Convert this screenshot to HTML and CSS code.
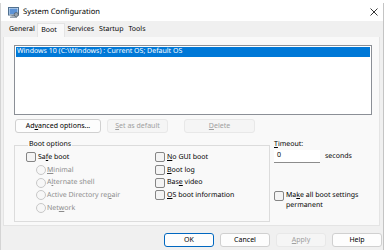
FILE: index.html
```html
<!DOCTYPE html>
<html lang="en">
<head>
    <meta charset="UTF-8">
    <title>System Configuration</title>
    <link rel="stylesheet" href="styles.css">
</head>
<body>
    <!-- Page behind the dialog, only its bottom edge shows -->
    <div class="behind"><div class="behind-text">windows 10/11 and windows server 2016/2019/2022</div></div>

    <div class="window">
        <!-- Title bar -->
        <div class="titlebar">
            <svg class="app-icon" width="11" height="11" viewBox="0 0 11 11">
                <rect x="0.5" y="0.5" width="10" height="7.5" fill="#e4ecf4" stroke="#50708f"/>
                <rect x="1.5" y="1.5" width="8" height="5.5" fill="#5d93d6"/>
                <rect x="3.5" y="8" width="4" height="1.5" fill="#7d8a97"/>
                <rect x="2" y="9.5" width="7" height="1.5" fill="#9aa5b0"/>
                <circle cx="8.3" cy="7.6" r="2.1" fill="#98a3ae" stroke="#4e5a66" stroke-width="0.7"/>
            </svg>
            <span class="title">System Configuration</span>
            <svg class="close" width="8" height="8" viewBox="0 0 8 8">
                <path d="M0.5 0.5 L7.5 7.5 M7.5 0.5 L0.5 7.5" stroke="#1f1f1f" stroke-width="0.9"/>
            </svg>
        </div>

        <!-- Tabs -->
        <div class="tabs">
            <span class="tab">General</span>
            <span class="tab active">Boot</span>
            <span class="tab">Services</span>
            <span class="tab">Startup</span>
            <span class="tab">Tools</span>
        </div>

        <div class="panel">
            <div class="listbox">
                <div class="list-item selected">Windows 10 (C:\Windows) : Current OS; Default OS</div>
            </div>

            <div class="list-buttons">
                <button class="btn btn-advanced">Ad<u>v</u>anced options...</button>
                <button class="btn btn-default" disabled><u>S</u>et as default</button>
                <button class="btn btn-delete" disabled><u>D</u>elete</button>
            </div>

            <div class="options-row">
                <fieldset class="boot-options">
                    <legend>Boot options</legend>
                    <div class="opt-col left">
                        <div class="opt"><span class="check"></span><span>Sa<u>f</u>e boot</span></div>
                        <div class="opt sub disabled"><span class="radio"></span><span><u>M</u>inimal</span></div>
                        <div class="opt sub disabled"><span class="radio"></span><span>A<u>l</u>ternate shell</span></div>
                        <div class="opt sub disabled"><span class="radio"></span><span>Active Directory re<u>p</u>air</span></div>
                        <div class="opt sub disabled"><span class="radio"></span><span>Net<u>w</u>ork</span></div>
                    </div>
                    <div class="opt-col">
                        <div class="opt"><span class="check"></span><span><u>N</u>o GUI boot</span></div>
                        <div class="opt"><span class="check"></span><span><u>B</u>oot log</span></div>
                        <div class="opt"><span class="check"></span><span>Bas<u>e</u> video</span></div>
                        <div class="opt"><span class="check"></span><span><u>O</u>S boot information</span></div>
                    </div>
                </fieldset>

                <div class="side">
                    <div class="timeout-label"><u>T</u>imeout:</div>
                    <div class="timeout-row">
                        <div class="textbox">0</div>
                        <span>seconds</span>
                    </div>
                    <div class="opt permanent"><span class="check"></span><span>Ma<u>k</u>e all boot settings<br>permanent</span></div>
                </div>
            </div>
        </div>

        <div class="footer">
            <button class="btn btn-ok">OK</button>
            <button class="btn">Cancel</button>
            <button class="btn" disabled><u>A</u>pply</button>
            <button class="btn">Help</button>
        </div>
    </div>
</body>
</html>
```

FILE: styles.css
```css
/* Global */
body {
    margin: 0;
    background: #ffffff;
    font-family: 'Noto Sans', 'Liberation Sans', sans-serif;
    font-size: 7px;
    color: #000;
    text-rendering: geometricPrecision;
    overflow: hidden;
}

u {
    text-decoration: underline;
    text-underline-offset: 1px;
    text-decoration-thickness: 1px;
}

.behind {
    height: 3px;
    overflow: hidden;
}

.behind-text {
    margin: -7px 0 0 262px;
    font-size: 7.5px;
    white-space: nowrap;
    color: #3a3a3a;
}

.window {
    width: 384px;
    height: 247px;
    background: #f0f0f0;
    border-left: 1px solid #d4d4d4;
    border-right: 1px solid #c4c4c4;
    box-sizing: border-box;
}

/* Title bar */
.titlebar {
    height: 18px;
    background: #fff;
    display: flex;
    align-items: center;
    padding-left: 7px;
    box-sizing: border-box;
}

.app-icon {
    margin-right: 4px;
}

.title {
    font-size: 7.6px;
    flex: 1;
}

.close {
    margin-right: 5px;
}

/* Tabs */
.tabs {
    height: 16px;
    display: flex;
    align-items: flex-end;
    padding-left: 5.5px;
}

.tab {
    height: 13px;
    line-height: 12px;
    padding: 0 2.5px;
}

.tab.active {
    background: #f9f9f9;
    height: 14px;
    line-height: 13px;
    padding: 0 7px 0 3px;
    border: 1px solid #e4e4e4;
    border-bottom: none;
    box-sizing: border-box;
}

/* Tab page */
.panel {
    margin: 0 3px 0 2px;
    height: 189px;
    background: #f9f9f9;
    border: 1px solid #e4e4e4;
    border-top: none;
    box-sizing: border-box;
    padding: 8px 6px 0 10px;
}

.listbox {
    width: 358px;
    height: 70px;
    background: #fff;
    border: 1px solid #8b8f96;
    padding: 1px 1px 0 1px;
    box-sizing: border-box;
}

.list-item {
    height: 10px;
    line-height: 10px;
    padding-left: 1px;
    white-space: nowrap;
}

.list-item.selected {
    background: #0078d7;
    color: #fff;
}

.list-buttons {
    display: flex;
    margin-top: 4px;
}

.btn {
    font-family: inherit;
    font-size: 7px;
    height: 14px;
    padding: 0;
    background: #fdfdfd;
    border: 1px solid #d0d0d0;
    border-radius: 3px;
    color: #000;
    line-height: 12px;
    white-space: nowrap;
}

.btn:disabled {
    background: #f5f5f5;
    border-color: #e8e8e8;
    color: #a0a0a0;
}

.btn-advanced {
    width: 86px;
    margin-left: 1px;
}

.btn-default {
    width: 61px;
    margin-left: 6px;
}

.btn-delete {
    width: 71px;
    margin-left: 16px;
}

/* Boot options */
.options-row {
    display: flex;
    margin-top: 7px;
}

.boot-options {
    width: 256px;
    height: 82px;
    margin: 0;
    padding: 1px 0 0 11px;
    border: 1px solid #dcdcdc;
    box-sizing: border-box;
    display: flex;
}

.boot-options legend {
    padding: 0 1px;
    margin-left: 2px;
    line-height: 10px;
}

.opt-col {
    display: flex;
    flex-direction: column;
}

.opt-col.left {
    width: 129px;
}

.opt {
    display: flex;
    align-items: center;
    height: 12.7px;
    white-space: nowrap;
}

.opt.sub {
    padding-left: 10px;
}

.opt.disabled {
    color: #8c8c8c;
}

.check {
    width: 10px;
    height: 10px;
    border: 1px solid #858585;
    border-radius: 2px;
    background: #f4f4f4;
    margin-right: 2px;
    flex-shrink: 0;
    box-sizing: border-box;
}

.radio {
    width: 10px;
    height: 10px;
    border: 1px solid #c8c8c8;
    border-radius: 50%;
    background: #f7f7f7;
    margin-right: 1px;
    box-sizing: border-box;
}

/* Timeout side */
.side {
    margin-left: 4px;
}

.timeout-label {
    height: 10px;
    line-height: 9px;
}

.timeout-row {
    display: flex;
    align-items: center;
}

.textbox {
    width: 46px;
    height: 13px;
    background: #fff;
    border-bottom: 1px solid #8c8c8c;
    box-sizing: border-box;
    padding-left: 3px;
    line-height: 12px;
    margin-right: 5px;
}

.permanent {
    align-items: flex-start;
    height: auto;
    margin-top: 28px;
    line-height: 9.5px;
}

.permanent .check {
    margin-top: 0;
    margin-right: 2px;
}

/* Dialog buttons */
.footer {
    display: flex;
    justify-content: flex-end;
    gap: 6px;
    padding: 7px 1px 0 0;
}

.footer .btn {
    width: 50px;
}

.btn-ok {
    border-color: #0067c0;
}
```
